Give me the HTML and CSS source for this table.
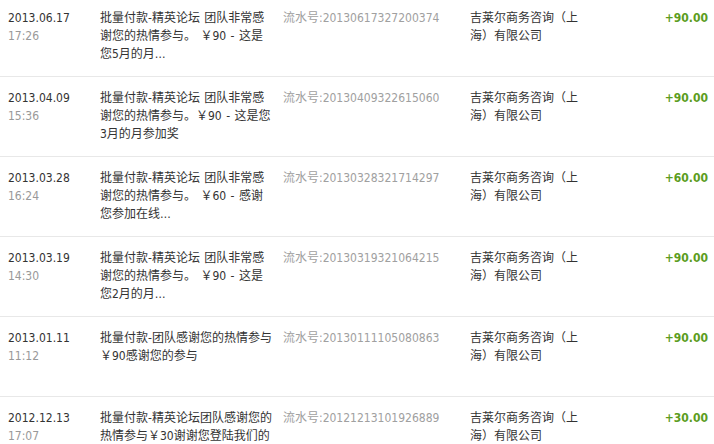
FILE: index.html
```html
<!DOCTYPE html>
<html lang="zh-CN">
<head>
<meta charset="utf-8">
<title>交易记录</title>
<link rel="stylesheet" href="styles.css">
</head>
<body>
<div class="list">
  <div class="row">
    <div class="when"><div class="date">2013.06.17</div><div class="time">17:26</div></div>
    <div class="desc">批量付款-精英论坛 团队非常感谢您的热情参与。 ￥90 - 这是您5月的月…</div>
    <div class="serial">流水号:20130617327200374</div>
    <div class="party">吉莱尔商务咨询（上海）有限公司</div>
    <div class="amount">+90.00</div>
  </div>
  <div class="row">
    <div class="when"><div class="date">2013.04.09</div><div class="time">15:36</div></div>
    <div class="desc">批量付款-精英论坛 团队非常感谢您的热情参与。￥90 - 这是您3月的月参加奖</div>
    <div class="serial">流水号:20130409322615060</div>
    <div class="party">吉莱尔商务咨询（上海）有限公司</div>
    <div class="amount">+90.00</div>
  </div>
  <div class="row">
    <div class="when"><div class="date">2013.03.28</div><div class="time">16:24</div></div>
    <div class="desc">批量付款-精英论坛 团队非常感谢您的热情参与。 ￥60 - 感谢您参加在线…</div>
    <div class="serial">流水号:20130328321714297</div>
    <div class="party">吉莱尔商务咨询（上海）有限公司</div>
    <div class="amount">+60.00</div>
  </div>
  <div class="row">
    <div class="when"><div class="date">2013.03.19</div><div class="time">14:30</div></div>
    <div class="desc">批量付款-精英论坛 团队非常感谢您的热情参与。 ￥90 - 这是您2月的月…</div>
    <div class="serial">流水号:20130319321064215</div>
    <div class="party">吉莱尔商务咨询（上海）有限公司</div>
    <div class="amount">+90.00</div>
  </div>
  <div class="row">
    <div class="when"><div class="date">2013.01.11</div><div class="time">11:12</div></div>
    <div class="desc">批量付款-团队感谢您的热情参与￥90感谢您的参与</div>
    <div class="serial">流水号:20130111105080863</div>
    <div class="party">吉莱尔商务咨询（上海）有限公司</div>
    <div class="amount">+90.00</div>
  </div>
  <div class="row">
    <div class="when"><div class="date">2012.12.13</div><div class="time">17:07</div></div>
    <div class="desc">批量付款-精英论坛团队感谢您的热情参与￥30谢谢您登陆我们的</div>
    <div class="serial">流水号:20121213101926889</div>
    <div class="party">吉莱尔商务咨询（上海）有限公司</div>
    <div class="amount">+30.00</div>
  </div>
</div>
</body>
</html>
```
FILE: styles.css
```css
html, body {
  margin: 0;
  padding: 0;
  background: #fff;
}
body {
  font-family: "DejaVu Sans Condensed", "DejaVu Sans", "Noto Sans CJK SC", sans-serif;
  font-size: 12px;
  line-height: 18px;
  color: #333;
  overflow: hidden;
}
.list {
  margin-top: -3px;
}
.row {
  display: grid;
  grid-template-columns: 92px 183px 187px 120px 1fr;
  box-sizing: border-box;
  height: 80px;
  padding: 12px 6px 0 8px;
  border-bottom: 1px solid #e8e8e8;
  overflow: hidden;
}
.time {
  color: #999;
}
.desc {
  padding-right: 10px;
  word-spacing: 1px;
  color: #333;
}
.serial {
  color: #a0a0a0;
}
.party {
  color: #333;
}
.amount {
  text-align: right;
  font-weight: bold;
  color: #5c9d1e;
}
```
